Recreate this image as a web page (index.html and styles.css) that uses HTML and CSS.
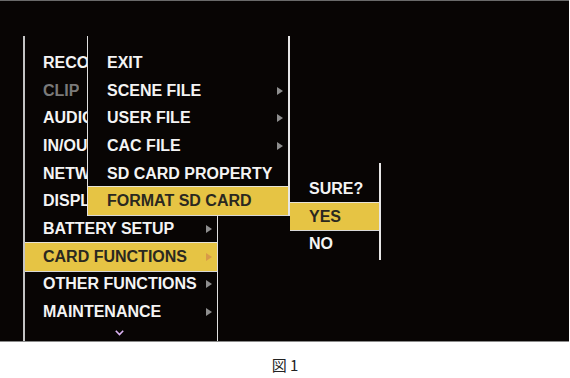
FILE: index.html
```html
<!DOCTYPE html>
<html lang="en">
<head>
  <meta charset="UTF-8">
  <title>Card Functions</title>
  <link rel="stylesheet" href="styles.css">
</head>
<body>
  <div class="screen">
    <div class="menu menu-main">
      <div class="row"><span class="label cut">RECORDING</span><span class="arrow"></span></div>
      <div class="row dim"><span class="label cut">CLIP</span><span class="arrow"></span></div>
      <div class="row"><span class="label cut">AUDIO</span><span class="arrow"></span></div>
      <div class="row"><span class="label cut">IN/OUT</span><span class="arrow"></span></div>
      <div class="row"><span class="label cut">NETWORK</span><span class="arrow"></span></div>
      <div class="row"><span class="label cut">DISPLAY</span><span class="arrow"></span></div>
      <div class="row"><span class="label">BATTERY SETUP</span><span class="arrow"></span></div>
      <div class="row active"><span class="label">CARD FUNCTIONS</span><span class="arrow"></span></div>
      <div class="row"><span class="label">OTHER FUNCTIONS</span><span class="arrow"></span></div>
      <div class="row"><span class="label">MAINTENANCE</span><span class="arrow"></span></div>
      <div class="more">
        <svg width="9" height="6" viewBox="0 0 9 6"><path d="M0.8 0.8 L4.5 4.6 L8.2 0.8" fill="none" stroke="#dcb4f4" stroke-width="1.6"/></svg>
      </div>
    </div>

    <div class="menu menu-sub">
      <div class="row">EXIT</div>
      <div class="row">SCENE FILE<span class="arrow"></span></div>
      <div class="row">USER FILE<span class="arrow"></span></div>
      <div class="row">CAC FILE<span class="arrow"></span></div>
      <div class="row">SD CARD PROPERTY</div>
      <div class="row active">FORMAT SD CARD</div>
    </div>

    <div class="menu menu-confirm">
      <div class="row">SURE?</div>
      <div class="row active">YES</div>
      <div class="row">NO</div>
    </div>
  </div>

  <p class="caption">図 1</p>
</body>
</html>
```

FILE: styles.css
```css
* {
  margin: 0;
  padding: 0;
  box-sizing: border-box;
}

body {
  width: 570px;
  height: 378px;
  background: #ffffff;
  font-family: 'Liberation Sans', Arial, sans-serif;
}

.screen {
  position: relative;
  width: 569px;
  height: 342px;
  background: #080504;
  border-top: 1px solid #6a6a6a;
  border-bottom: 1px solid #8a8a8a;
  display: flex;
  flex-direction: column;
  overflow: hidden;
}

.menu {
  background: #080504;
  color: #f4f4f4;
  font-size: 16px;
  font-weight: bold;
}

.row {
  height: 27.7px;
  display: flex;
  align-items: center;
  justify-content: space-between;
  white-space: nowrap;
}

.row.dim {
  color: #7a7a7a;
}

.row.active {
  background: #e6c444;
  color: #2a2820;
  box-shadow: 0 -1px 0 #e8e4d4, 0 1px 0 #d8d8d8;
}

.arrow {
  width: 0;
  height: 0;
  border-left: 6px solid #8e8e8e;
  border-top: 4px solid transparent;
  border-bottom: 4px solid transparent;
}

.row.active .arrow {
  border-left-color: #d89a48;
}

/* main menu, partly hidden under the submenu */
.menu-main {
  flex: 1;
  width: 195px;
  margin: 35px 0 0 23px;
  padding: 13px 5px 0 18px;
  border-left: 2px solid #c4c4c4;
  border-right: 1px solid #e0e0e0;
}

.label.cut {
  max-width: 44px;
  overflow: hidden;
}

.menu-main .row.active {
  margin-left: -18px;
  margin-right: -5px;
  padding: 0 5px 0 18px;
}

.more {
  display: flex;
  padding: 4px 0 0 72px;
}

.menu-sub {
  position: absolute;
  left: 87px;
  top: 35px;
  width: 203px;
  height: 180px;
  padding: 13px 5px 0 19px;
  border-left: 1px solid #e0e0e0;
  border-right: 2px solid #e6e6e6;
}

.menu-sub .row.active {
  margin-left: -19px;
  margin-right: -5px;
  padding: 0 5px 0 19px;
}

.menu-confirm {
  position: absolute;
  left: 290px;
  top: 162px;
  width: 91px;
  height: 97px;
  padding: 12px 0 0 19px;
  border-right: 2px solid #e6e6e6;
}

.menu-confirm .row.active {
  margin-left: -19px;
  padding-left: 19px;
}

.caption {
  text-align: center;
  padding-top: 14px;
  font-family: 'Noto Sans CJK JP', sans-serif;
  font-size: 15px;
  line-height: 18px;
  color: #222222;
}
```
